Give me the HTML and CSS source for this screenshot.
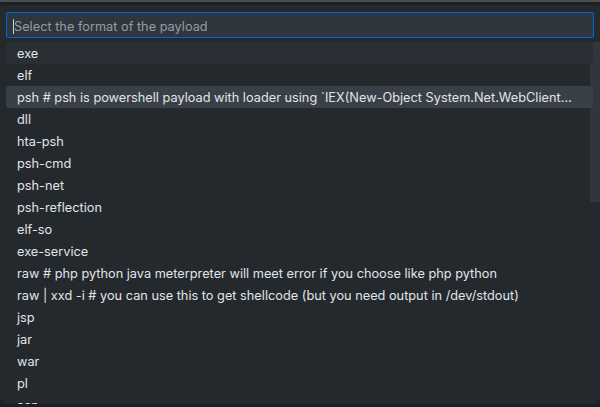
FILE: index.html
```html
<!DOCTYPE html>
<html>
<head>
<meta charset="utf-8">
<link rel="stylesheet" href="styles.css">
</head>
<body>
<div class="topbar"></div>
<div class="panel">
  <div class="input"><span class="caret"></span><span class="placeholder">Select the format of the payload</span></div>
  <div class="list">
    <div class="row first">exe</div>
    <div class="row">elf</div>
    <div class="row active">psh # psh is powershell payload with loader using `IEX(New-Object System.Net.WebClient…</div>
    <div class="row">dll</div>
    <div class="row">hta-psh</div>
    <div class="row">psh-cmd</div>
    <div class="row">psh-net</div>
    <div class="row">psh-reflection</div>
    <div class="row">elf-so</div>
    <div class="row">exe-service</div>
    <div class="row">raw # php python java meterpreter will meet error if you choose like php python</div>
    <div class="row">raw | xxd -i # you can use this to get shellcode (but you need output in /dev/stdout)</div>
    <div class="row">jsp</div>
    <div class="row">jar</div>
    <div class="row">war</div>
    <div class="row">pl</div>
    <div class="row">asp</div>
    <div class="row">aspx</div>
  </div>
  <div class="scrollbar"></div>
</div>
</body>
</html>
```
FILE: styles.css
```css
html, body {
  margin: 0;
  padding: 0;
  background: #1c2024;
  width: 600px;
  height: 407px;
  overflow: hidden;
  font-family: Inter, "Liberation Sans", Arial, sans-serif;
}
.topbar {
  height: 2px;
  background: #4a4e53;
}
.panel {
  position: relative;
  margin-top: 3px;
  height: 399px;
  background: #24292e;
  border-radius: 4px 4px 6px 6px;
  padding: 7px 6px 0 6px;
  box-sizing: border-box;
  overflow: hidden;
}
.input {
  height: 26px;
  box-sizing: border-box;
  border: 1px solid #0366d6;
  border-radius: 2px;
  background: #2f363d;
  display: flex;
  align-items: center;
  padding-left: 6px;
  padding-top: 2px;
}
.caret {
  width: 1px;
  height: 15px;
  background: #c9d1d9;
}
.placeholder {
  font-size: 12.75px;
  color: #959da5;
}
.list {
  margin-top: 4px;
  width: 587px;
  position: relative;
  z-index: 1;
}
.row {
  height: 22px;
  line-height: 24px;
  padding-left: 11px;
  padding-right: 8px;
  font-size: 12.75px;
  color: #e1e4e8;
  white-space: nowrap;
  overflow: hidden;
  text-overflow: ellipsis;
  border-radius: 3px;
}
.row.first {
  background: #2a2f35;
}
.row.active {
  background: #3a4047;
}
.scrollbar {
  position: absolute;
  right: 0;
  top: 37px;
  width: 10px;
  height: 160px;
  background: #31363c;
}
```
